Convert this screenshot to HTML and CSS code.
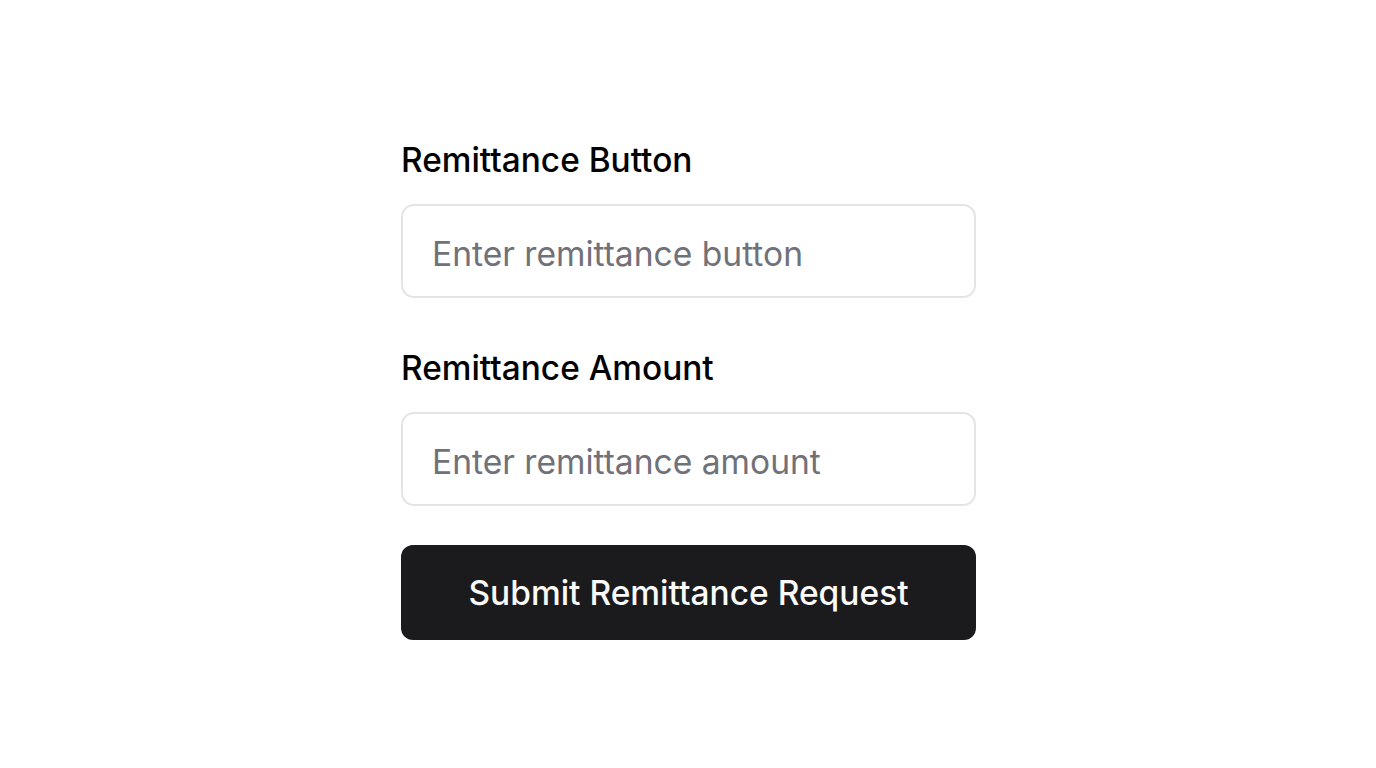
FILE: index.html
```html
<!DOCTYPE html>
<html lang="en">
<head>
<meta charset="utf-8">
<title>Remittance</title>
<link rel="stylesheet" href="styles.css">
</head>
<body>
<main class="page">
  <form class="form">
    <div class="field">
      <label class="label" for="rb">Remittance Button</label>
      <input class="input" id="rb" type="text" placeholder="Enter remittance button">
    </div>
    <div class="field">
      <label class="label" for="ra">Remittance Amount</label>
      <input class="input" id="ra" type="text" placeholder="Enter remittance amount">
    </div>
    <button class="submit" type="button">Submit Remittance Request</button>
  </form>
</main>
</body>
</html>
```
FILE: styles.css
```css
* { box-sizing: border-box; }
html, body { margin: 0; padding: 0; background: #ffffff; }
body { font-family: Inter, "Noto Sans", sans-serif; color: #09090b; }
.page {
  width: 1376px;
  height: 768px;
  display: flex;
  justify-content: center;
  padding-top: 140px;
}
.form {
  width: 575px;
  margin-left: 1px;
  display: flex;
  flex-direction: column;
}
.field {
  display: flex;
  flex-direction: column;
}
.field + .field { margin-top: 50px; }
.label {
  font-size: 33.4px;
  font-weight: 500;
  line-height: 40px;
  margin-bottom: 24px;
  color: #000;
}
.input {
  height: 94px;
  border: 2px solid #e4e4e7;
  border-radius: 13px;
  background: #ffffff;
  padding: 4px 29px 0;
  font-family: Inter, sans-serif;
  font-size: 33.6px;
  color: #09090b;
  outline: none;
}
.input::placeholder { color: #71717a; }
.submit {
  margin-top: 39px;
  height: 95px;
  border: none;
  border-radius: 12px;
  background: #1b1b1d;
  color: #fafafa;
  font-family: Inter, sans-serif;
  font-size: 33.5px;
  font-weight: 500;
  cursor: pointer;
}
```
